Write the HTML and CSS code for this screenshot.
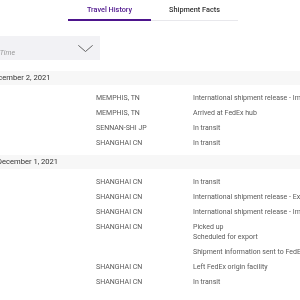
FILE: index.html
```html
<!DOCTYPE html>
<html lang="en">
<head>
    <meta charset="UTF-8">
    <meta name="viewport" content="width=device-width, initial-scale=1.0">
    <title>Travel History</title>
    <link rel="stylesheet" href="styles.css">
</head>
<body>
    <div class="page">
        <div class="tabs">
            <div class="tab active">Travel History</div>
            <div class="tab">Shipment Facts</div>
        </div>

        <div class="sort">
            <span class="sort-label">Local Scan Time</span>
            <svg class="chevron" width="15" height="7" viewBox="0 0 15 7">
                <polyline points="0.3,0.3 7.5,6.5 14.7,0.3" fill="none" stroke="#555" stroke-width="0.9"/>
            </svg>
        </div>

        <div class="day">
            <div class="day-head">Thursday, December 2, 2021</div>
            <div class="events">
                <div class="event"><span class="where">MEMPHIS, TN</span><span class="what">International shipment release - Import</span></div>
                <div class="event"><span class="where">MEMPHIS, TN</span><span class="what">Arrived at FedEx hub</span></div>
                <div class="event"><span class="where">SENNAN-SHI JP</span><span class="what">In transit</span></div>
                <div class="event"><span class="where">SHANGHAI CN</span><span class="what">In transit</span></div>
            </div>
        </div>

        <div class="day">
            <div class="day-head">Wednesday, December 1, 2021</div>
            <div class="events">
                <div class="event"><span class="where">SHANGHAI CN</span><span class="what">In transit</span></div>
                <div class="event"><span class="where">SHANGHAI CN</span><span class="what">International shipment release - Export</span></div>
                <div class="event"><span class="where">SHANGHAI CN</span><span class="what">International shipment release - Import</span></div>
                <div class="event"><span class="where">SHANGHAI CN</span><span class="what">Picked up<br>Scheduled for export</span></div>
                <div class="event"><span class="where"></span><span class="what">Shipment information sent to FedEx</span></div>
                <div class="event"><span class="where">SHANGHAI CN</span><span class="what">Left FedEx origin facility</span></div>
                <div class="event"><span class="where">SHANGHAI CN</span><span class="what">In transit</span></div>
            </div>
        </div>
    </div>
</body>
</html>
```

FILE: styles.css
```css
body { margin: 0; padding: 0; font-family: Roboto, "Liberation Sans", sans-serif; color: #666; background: #fff; overflow: hidden; }
.page { width: 300px; height: 300px; overflow: hidden; will-change: transform; }

.tabs { display: flex; margin-left: 68px; width: 170px; border-bottom: 1px solid #e8e8ec; }
.tab { flex: 1; text-align: center; font-size: 7.3px; font-weight: 500; line-height: 12px; padding-top: 4px; padding-bottom: 3px; color: #333; }
.tab.active { color: #4d148c; border-bottom: 2px solid #4d148c; margin-bottom: -1px; flex: 0 0 83px; }

.sort { display: flex; align-items: center; justify-content: space-between; margin-top: 15px; margin-left: -35px; width: 135px; height: 24px; background: #f2f2f5; box-sizing: border-box; padding: 0 7px 0 0; }
.sort-label { font-size: 7px; font-style: italic; color: #999; padding-top: 9px; }
.chevron { display: block; }

.day { margin-top: 11px; }
.day + .day { margin-top: 0; }
.day-head { background: #f7f7f7; height: 14px; line-height: 14px; font-size: 7.6px; color: #333; margin-left: -45px; }
.events { padding: 5px 0; }
.event { display: flex; font-size: 7px; line-height: 10px; padding: 2.5px 0; color: #5a5a5a; }
.where { width: 97px; margin-left: 96px; flex: none; white-space: nowrap; }
.what { white-space: nowrap; }
```
